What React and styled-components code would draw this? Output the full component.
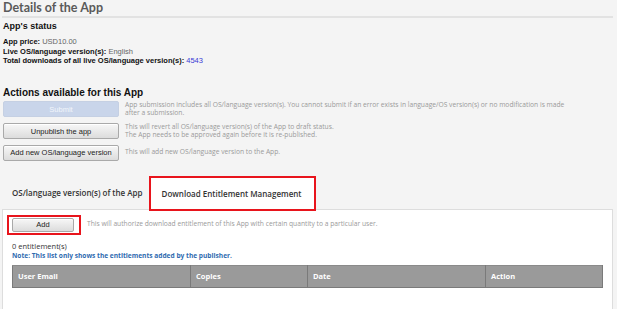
import React from "react";
import styled, { createGlobalStyle } from "styled-components";

const GlobalStyle = createGlobalStyle`
  html, body {
    margin: 0;
    padding: 0;
    background: #f4f4f4;
  }
  body {
    font-family: "Liberation Sans", Arial, sans-serif;
    color: #222;
  }
`;

const Page = styled.div`
  width: 617px;
  height: 309px;
  overflow: hidden;
  padding: 0 4px 0 2px;
  box-sizing: border-box;
`;

const Title = styled.h1`
  margin: 0;
  padding: 0 1px 1px;
  font-family: Lato, "Open Sans", sans-serif;
  font-size: 12.5px;
  font-weight: 700;
  color: #5a5a5a;
  line-height: 15px;
  border-bottom: 2px solid #e2e2e2;
`;

const Section = styled.section`
  padding: 0 1px;
`;

const SectionTitle = styled.h2`
  margin: ${(p) => p.$top || 2}px 0 ${(p) => p.$bottom || 5}px;
  font-size: ${(p) => p.$size || 10}px;
  font-weight: 700;
  line-height: 12px;
  color: #111;
`;

const InfoLine = styled.div`
  font-size: 7.5px;
  line-height: 9.5px;
  color: #666;
  b {
    color: #111;
  }
`;

const Num = styled.span`
  color: #3a3ad6;
`;

const ActionList = styled.div`
  display: flex;
  flex-direction: column;
  gap: 5px;
`;

const ActionRow = styled.div`
  display: flex;
  align-items: center;
  gap: 6px;
`;

const Button = styled.button`
  flex: none;
  display: block;
  width: ${(p) => p.$width || 116}px;
  height: ${(p) => p.$height || 16}px;
  padding: 0;
  font-family: "Liberation Sans", Arial, sans-serif;
  font-size: 7.5px;
  color: #222;
  border: 1px solid #a9a9a9;
  border-radius: 2px;
  background: linear-gradient(#f7f7f7, #dcdcdc);
  box-shadow: inset 0 1px 0 #fff;
  &:disabled {
    color: #f2f5fb;
    border-color: #c5d0e3;
    background: #c9d5ea;
    box-shadow: none;
  }
`;

const Hint = styled.div`
  font-family: "Open Sans", sans-serif;
  font-size: 6.7px;
  line-height: 8.5px;
  color: #9a9a9a;
`;

const Tabs = styled.div`
  display: flex;
  align-items: flex-end;
  margin-top: 15px;
`;

const Tab = styled.div`
  box-sizing: border-box;
  height: ${(p) => (p.$active ? 35 : 32)}px;
  display: flex;
  align-items: center;
  padding: ${(p) => (p.$active ? "0 12px 0 11px" : "0 6px 0 10px")};
  font-family: "Open Sans", sans-serif;
  font-size: 8px;
  font-weight: 600;
  color: #333;
  background: ${(p) => (p.$active ? "#fff" : "transparent")};
  border: ${(p) => (p.$active ? "2px solid #e8141c" : "none")};
  position: relative;
  z-index: 1;
  margin-bottom: ${(p) => (p.$active ? -2 : 0)}px;
`;

const Panel = styled.div`
  background: #fff;
  border: 1px solid #ddd;
  height: 101px;
  padding: 5px 9px 0 4px;
  box-sizing: border-box;
`;

const Highlight = styled.div`
  flex: none;
  border: 2px solid #e8141c;
  padding: 1px 5px 1px 3px;
`;

const CountLine = styled.div`
  margin-top: 6px;
  font-family: "Open Sans", sans-serif;
  font-size: 7.5px;
  line-height: 10px;
  color: #333;
  padding-left: 5px;
`;

const Note = styled.div`
  font-family: "Open Sans", sans-serif;
  font-size: 6.6px;
  font-weight: 700;
  line-height: 9px;
  color: #2f6bb0;
  padding-left: 5px;
`;

const Table = styled.table`
  margin: 5px 0 0 5px;
  width: 591px;
  border-collapse: collapse;
  th {
    height: 22px;
    box-sizing: border-box;
    padding: 0 0 0 5px;
    text-align: left;
    font-family: "Open Sans", sans-serif;
    font-size: 7.5px;
    font-weight: 700;
    color: #fff;
    background: #9a9a9a;
    border: 1px solid #7a7a7a;
    border-top-color: #8a8a8a;
  }
`;

const App = () => {
  return (
    <Page>
      <GlobalStyle />
      <Title>Details of the App</Title>
      <Section>
        <SectionTitle $size={9}>App's status</SectionTitle>
        <InfoLine>
          <b>App price:</b> USD10.00
        </InfoLine>
        <InfoLine>
          <b>Live OS/language version(s):</b> English
        </InfoLine>
        <InfoLine>
          <b>Total downloads of all live OS/language version(s):</b> <Num>4543</Num>
        </InfoLine>

        <SectionTitle $top={21} $bottom={2}>
          Actions available for this App
        </SectionTitle>
        <ActionList>
          <ActionRow>
            <Button disabled>Submit</Button>
            <Hint>
              App submission includes all OS/language version(s). You cannot submit if an error exists in
              language/OS version(s) or no modification is made
              <br />
              after a submission.
            </Hint>
          </ActionRow>
          <ActionRow>
            <Button>Unpublish the app</Button>
            <Hint>
              This will revert all OS/language version(s) of the App to draft status.
              <br />
              The App needs to be approved again before it is re-published.
            </Hint>
          </ActionRow>
          <ActionRow>
            <Button>Add new OS/language version</Button>
            <Hint>This will add new OS/language version to the App.</Hint>
          </ActionRow>
        </ActionList>
      </Section>

      <Tabs>
        <Tab>OS/language version(s) of the App</Tab>
        <Tab $active>Download Entitlement Management</Tab>
      </Tabs>
      <Panel>
        <ActionRow>
          <Highlight>
            <Button $width={62} $height={14}>Add</Button>
          </Highlight>
          <Hint>
            This will authorize download entitlement of this App with certain quantity to a particular user.
          </Hint>
        </ActionRow>
        <CountLine>0 entitlement(s)</CountLine>
        <Note>Note: This list only shows the entitlements added by the publisher.</Note>
        <Table>
          <thead>
            <tr>
              <th style={{ width: 178 }}>User Email</th>
              <th style={{ width: 117 }}>Copies</th>
              <th style={{ width: 178 }}>Date</th>
              <th>Action</th>
            </tr>
          </thead>
        </Table>
      </Panel>
    </Page>
  );
};

export default App;
